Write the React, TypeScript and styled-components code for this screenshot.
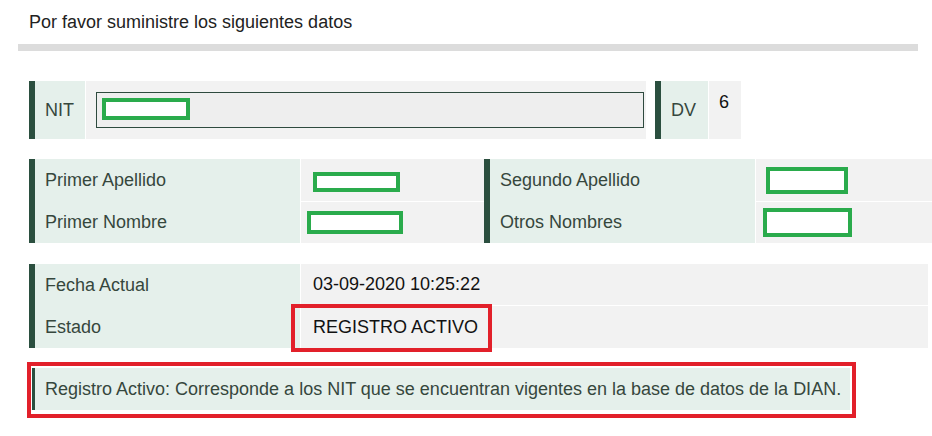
import styled, { createGlobalStyle } from "styled-components";

const GlobalStyle = createGlobalStyle`
  body {
    margin: 0;
    background: #ffffff;
    font-family: "Liberation Sans", Arial, sans-serif;
  }
`;

const LABEL_BG = "#e5f0eb";
const VALUE_BG = "#f2f2f2";
const BAR = "#2b4f3f";
const LABEL_TEXT = "#36473d";

export default function App() {
  return (
    <>
      <GlobalStyle />
      <Page>
        <Title>Por favor suministre los siguientes datos</Title>
        <Divider />

        <NitRow>
          <Bar />
          <LabelCell $w={50}>NIT</LabelCell>
          <NitValue>
            <NitInput>
              <Masked $w={88} $h={22} />
            </NitInput>
          </NitValue>
          <Gap />
          <Bar />
          <LabelCell $w={47}>DV</LabelCell>
          <DvValue>6</DvValue>
        </NitRow>

        <NamesTable>
          <TallBar />
          <Label>Primer Apellido</Label>
          <Value $first $pad={12}>
            <Masked $w={87} $h={20} $dy={3} />
          </Value>
          <TallBar />
          <Label>Segundo Apellido</Label>
          <Value $first $pad={10}>
            <Masked $w={82} $h={27} />
          </Value>

          <Label>Primer Nombre</Label>
          <Value $pad={6}>
            <Masked $w={96} $h={23} />
          </Value>
          <Label>Otros Nombres</Label>
          <Value $pad={7}>
            <Masked $w={89} $h={29} />
          </Value>
        </NamesTable>

        <StatusTable>
          <TallBar />
          <Label>Fecha Actual</Label>
          <Value $first $pad={12}>
            <Text>03-09-2020 10:25:22</Text>
          </Value>
          <Label>Estado</Label>
          <Value $pad={12}>
            <Text>REGISTRO ACTIVO</Text>
            <Highlight />
          </Value>
        </StatusTable>

        <NoteFrame>
          <Note>
            Registro Activo: Corresponde a los NIT que se encuentran vigentes en
            la base de datos de la DIAN.
          </Note>
        </NoteFrame>
      </Page>
    </>
  );
}

const Page = styled.div`
  width: 932px;
  height: 436px;
  padding: 12px 0 0 29px;
  box-sizing: border-box;
  overflow: hidden;
`;

const Title = styled.h1`
  margin: 0;
  font-size: 18px;
  font-weight: normal;
  line-height: 21px;
  color: #222;
`;

const Divider = styled.div`
  height: 7px;
  width: 900px;
  margin: 11px 0 0 -11px;
  background: #dcdcdc;
`;

const NitRow = styled.div`
  display: flex;
  height: 58px;
  margin-top: 30px;
`;

const Bar = styled.div`
  width: 6px;
  background: ${BAR};
`;

const TallBar = styled.div`
  grid-row: span 2;
  background: ${BAR};
`;

const LabelCell = styled.div<{ $w: number }>`
  width: ${(p) => p.$w}px;
  padding-left: 10px;
  box-sizing: border-box;
  display: flex;
  align-items: center;
  background: ${LABEL_BG};
  color: ${LABEL_TEXT};
  font-size: 18px;
`;

const NitValue = styled.div`
  width: 560px;
  margin-left: 1px;
  padding: 11px 2px 0 10px;
  box-sizing: border-box;
  background: ${VALUE_BG};
`;

const NitInput = styled.div`
  height: 36px;
  border: 1px solid #2e4a3e;
  background: #eeeeee;
  box-sizing: border-box;
  padding: 5px;
`;

const Gap = styled.div`
  width: 9px;
`;

const DvValue = styled.div`
  width: 32px;
  margin-left: 1px;
  padding: 11px 0 0 10px;
  box-sizing: border-box;
  background: ${VALUE_BG};
  font-size: 18px;
  line-height: 21px;
  color: #111;
`;

const Masked = styled.div<{ $w: number; $h: number; $dy?: number }>`
  width: ${(p) => p.$w}px;
  height: ${(p) => p.$h}px;
  margin-top: ${(p) => p.$dy ?? 0}px;
  border: 4px solid #2aab4c;
  background: #ffffff;
  box-sizing: border-box;
`;

const NamesTable = styled.div`
  display: grid;
  grid-template-columns: 6px 265px 184px 6px 265px 1fr;
  grid-template-rows: 43px 41px;
  margin-top: 20px;
`;

const StatusTable = styled.div`
  display: grid;
  grid-template-columns: 6px 265px 628px;
  grid-template-rows: 42px 42px;
  margin-top: 21px;
`;

const Label = styled.div`
  display: flex;
  align-items: center;
  padding-left: 10px;
  background: ${LABEL_BG};
  color: ${LABEL_TEXT};
  font-size: 18px;
`;

const Value = styled.div<{ $first?: boolean; $pad: number }>`
  position: relative;
  display: flex;
  align-items: center;
  padding-left: ${(p) => p.$pad}px;
  background: ${VALUE_BG};
  border-left: 1px solid #ffffff;
  border-bottom: ${(p) => (p.$first ? "1px solid #ffffff" : "none")};
`;

const Text = styled.span`
  font-size: 18px;
  color: #111;
`;

const Highlight = styled.div`
  position: absolute;
  left: -10px;
  top: -2px;
  width: 201px;
  height: 48px;
  border: 4px solid #e2202a;
  box-sizing: border-box;
`;

const NoteFrame = styled.div`
  width: 829px;
  margin: 14px 0 0 -2px;
  padding: 2px 2px 4px 1px;
  border: 4px solid #e2202a;
  box-sizing: border-box;
`;

const Note = styled.div`
  height: 42px;
  display: flex;
  align-items: center;
  padding-left: 10px;
  border-left: 3px solid ${BAR};
  background: ${LABEL_BG};
  color: ${LABEL_TEXT};
  font-size: 18px;
  white-space: nowrap;
`;
